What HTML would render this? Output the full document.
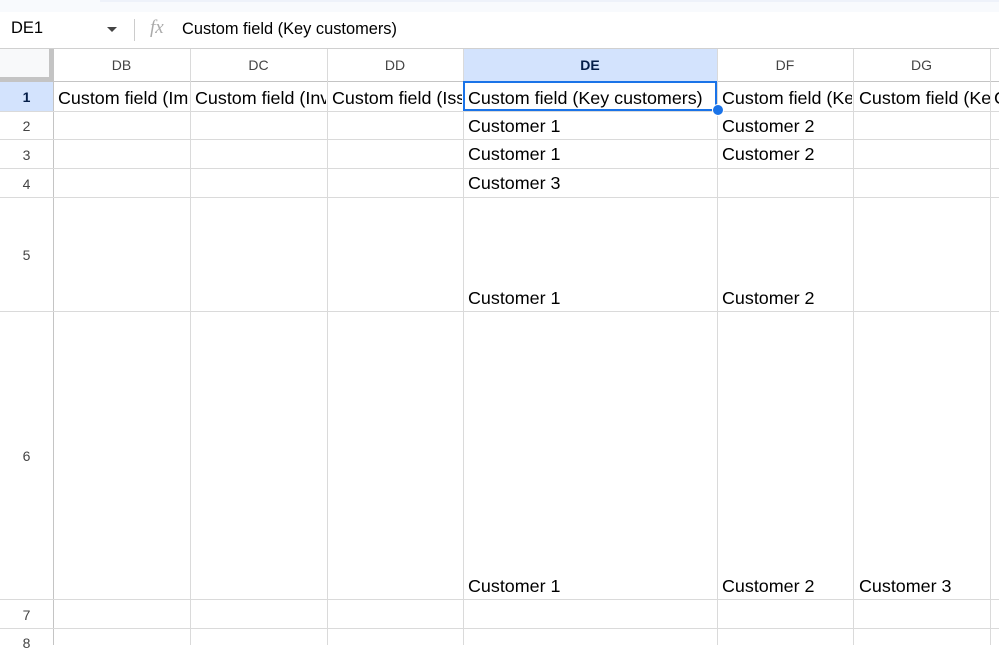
<!DOCTYPE html>
<html><head><style>
body{margin:0;width:999px;height:645px;overflow:hidden;background:#fff;font-family:"Liberation Sans",Arial,sans-serif;position:relative}
.a{position:absolute}
.vl{position:absolute;width:1px;background:#dadada}
.hl{position:absolute;height:1px;background:#dadada}
.ch{position:absolute;top:49px;height:32px;line-height:32px;text-align:center;font-size:14px;color:#444}
.rh{position:absolute;left:0;width:53px;text-align:center;font-size:14px;color:#444}
.t{position:absolute;font-size:17.9px;color:#000;white-space:nowrap;overflow:hidden}
</style></head><body>
<div class="a" style="left:0;top:0;width:999px;height:12px;background:#f8fafd"></div>
<div class="a" style="left:100px;top:0;width:899px;height:2px;background:#eef2fa"></div>
<div class="a" style="left:11px;top:19px;font-size:16.5px;color:#000">DE1</div>
<div class="a" style="left:107px;top:27px;width:0;height:0;border-left:5px solid transparent;border-right:5px solid transparent;border-top:5px solid #444"></div>
<div class="a" style="left:134px;top:19px;width:1px;height:22px;background:#ccc"></div>
<div class="a" style="left:150px;top:17px;font-size:19px;font-style:italic;color:#aaa;font-family:'Liberation Serif',serif">fx</div>
<div class="a" style="left:182px;top:20px;font-size:16.4px;color:#000">Custom field (Key customers)</div>
<div class="hl" style="left:0;top:48px;width:999px;background:#d0d0d0"></div>
<div class="a" style="left:0;top:49px;width:53px;height:32px;background:#f8f9fa"></div>
<div class="a" style="left:49px;top:49px;width:4px;height:32px;background:#c4c4c4"></div>
<div class="a" style="left:0;top:77px;width:53px;height:4px;background:#c4c4c4"></div>
<div class="a" style="left:463px;top:49px;width:254px;height:32px;background:#d3e3fd"></div>
<div class="a" style="left:0;top:82px;width:53px;height:29px;background:#d3e3fd"></div>
<div class="ch" style="left:53px;width:137px">DB</div>
<div class="ch" style="left:190px;width:137px">DC</div>
<div class="ch" style="left:327px;width:136px">DD</div>
<div class="ch" style="left:463px;width:254px;font-weight:bold;color:#041e49">DE</div>
<div class="ch" style="left:717px;width:136px">DF</div>
<div class="ch" style="left:853px;width:137px">DG</div>
<div class="hl" style="left:0;top:81px;width:999px;background:#c4c4c4"></div>
<div class="vl" style="left:53px;top:49px;height:596px;background:#c4c4c4"></div>
<div class="vl" style="left:190px;top:49px;height:596px"></div>
<div class="vl" style="left:327px;top:49px;height:596px"></div>
<div class="vl" style="left:463px;top:49px;height:596px"></div>
<div class="vl" style="left:717px;top:49px;height:596px"></div>
<div class="vl" style="left:853px;top:49px;height:596px"></div>
<div class="vl" style="left:990px;top:49px;height:596px"></div>
<div class="hl" style="left:0;top:111px;width:999px"></div>
<div class="hl" style="left:0;top:139px;width:999px"></div>
<div class="hl" style="left:0;top:168px;width:999px"></div>
<div class="hl" style="left:0;top:197px;width:999px"></div>
<div class="hl" style="left:0;top:311px;width:999px"></div>
<div class="hl" style="left:0;top:599px;width:999px"></div>
<div class="hl" style="left:0;top:628px;width:999px"></div>
<div class="rh" style="top:89px;font-weight:bold;color:#041e49">1</div>
<div class="rh" style="top:118px">2</div>
<div class="rh" style="top:147px">3</div>
<div class="rh" style="top:176px">4</div>
<div class="rh" style="top:247px">5</div>
<div class="rh" style="top:448px">6</div>
<div class="rh" style="top:607px">7</div>
<div class="rh" style="top:635px">8</div>
<div class="t" style="left:58px;top:88px;width:131px">Custom field (Impact)</div>
<div class="t" style="left:195px;top:88px;width:131px">Custom field (Inv</div>
<div class="t" style="left:332px;top:88px;width:130px">Custom field (Issue</div>
<div class="t" style="left:468px;top:88px">Custom field (Key customers)</div>
<div class="t" style="left:722px;top:88px;width:130px">Custom field (Key</div>
<div class="t" style="left:859px;top:88px;width:131px">Custom field (Key</div>
<div class="t" style="left:994px;top:88px;width:5px">C</div>
<div class="a" style="left:463px;top:81px;width:250px;height:26px;border:2px solid #1a73e8"></div>
<div class="a" style="left:712px;top:104px;width:10px;height:10px;border-radius:50%;background:#1a73e8;border:1px solid #fff"></div>
<div class="t" style="left:468px;top:116px">Customer 1</div>
<div class="t" style="left:722px;top:116px">Customer 2</div>
<div class="t" style="left:468px;top:144px">Customer 1</div>
<div class="t" style="left:722px;top:144px">Customer 2</div>
<div class="t" style="left:468px;top:173px">Customer 3</div>
<div class="t" style="left:468px;top:288px">Customer 1</div>
<div class="t" style="left:722px;top:288px">Customer 2</div>
<div class="t" style="left:468px;top:576px">Customer 1</div>
<div class="t" style="left:722px;top:576px">Customer 2</div>
<div class="t" style="left:859px;top:576px">Customer 3</div>
</body></html>
